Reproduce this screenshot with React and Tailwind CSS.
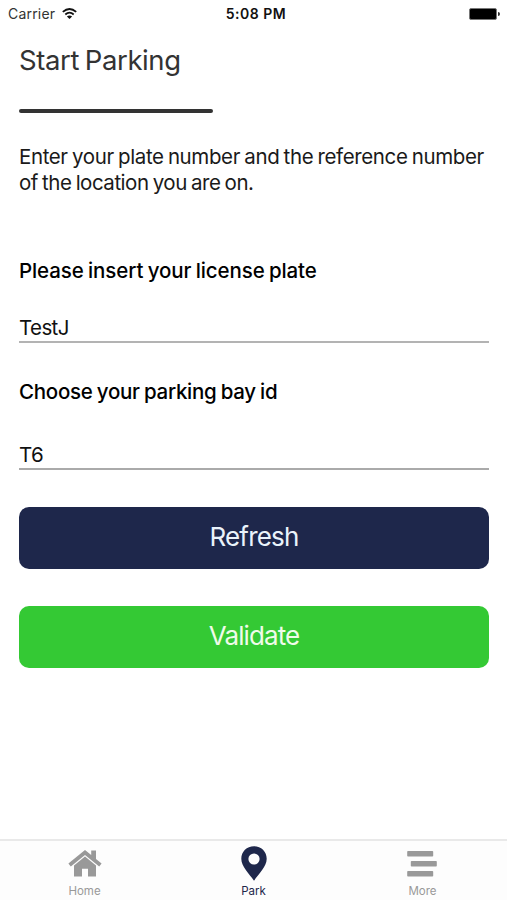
function WifiIcon() {
  return (
    <svg className="ml-[7px] mb-[2px] h-[11px] w-[15px]" viewBox="0 0 15 11" fill="none" stroke="#111" strokeWidth="1.8">
      <path d="M0.8 3.9 Q7.5 -2 14.2 3.9" />
      <path d="M3.3 6.5 Q7.5 2.8 11.7 6.5" />
      <path d="M7.5 11 L4.9 8.4 Q7.5 6.4 10.1 8.4 Z" fill="#111" stroke="none" />
    </svg>
  );
}

function StatusBar() {
  return (
    <header className="grid h-7 grid-cols-3 items-center pl-[8px] pr-[7px] text-[14px] leading-7 text-[#111]">
      <div className="flex items-center">
        <span className="tracking-[0.2px] text-[#333]">Carrier</span>
        <WifiIcon />
      </div>
      <div className="text-center font-semibold tracking-[0.5px] whitespace-nowrap pl-[4px]">5:08 PM</div>
      <div className="flex items-center justify-end">
        <div className="mb-px h-[12px] w-[28px] rounded-[2px] border border-[#777] bg-black" />
        <div className="ml-px h-[4px] w-[2px] rounded-r-full bg-[#333]" />
      </div>
    </header>
  );
}

function Field({ label, value, className, labelClass, lineClass }) {
  return (
    <div className={className}>
      <label className={`block text-[20.5px] leading-[26px] text-black ${labelClass}`}>{label}</label>
      <div className={`flex items-end text-[20.5px] leading-[26px] tracking-[-0.6px] text-[#111] ${lineClass}`}>{value}</div>
    </div>
  );
}

function HomeIcon() {
  return (
    <svg className="h-[27px] w-[34px]" viewBox="0 0 34 27" fill="#999">
      <path d="M17 0 L0.4 13.6 L2.8 16.5 L17 4.9 L31.2 16.5 L33.6 13.6 L28 9 V0.6 H23.2 V5.1 Z" />
      <path d="M17 6.6 L6 15.6 V26.4 H14 V18.8 H20 V26.4 H28 V15.6 Z" />
    </svg>
  );
}

function PinIcon() {
  return (
    <svg className="h-[35px] w-[26px]" viewBox="0 0 26 35">
      <path fillRule="evenodd" fill="#1e274b" d="M13 0.3 C5.8 0.3 0.3 5.8 0.3 12.7 C0.3 20.6 8.2 27.5 13 34.7 C17.8 27.5 25.7 20.6 25.7 12.7 C25.7 5.8 20.2 0.3 13 0.3 Z M13 7.4 A5.6 5.6 0 1 1 13 18.6 A5.6 5.6 0 1 1 13 7.4 Z" />
    </svg>
  );
}

function MoreIcon() {
  return (
    <svg className="mr-px h-[26px] w-[30px]" viewBox="0 0 30 26" fill="#999">
      <rect x="0.2" y="0" width="26" height="5.6" rx="0.8" />
      <rect x="3.8" y="10" width="26" height="5.6" rx="0.8" />
      <rect x="0.2" y="20" width="26" height="5.6" rx="0.8" />
    </svg>
  );
}

function Tab({ icon, label, className }) {
  return (
    <div className={`flex flex-col items-center ${className}`}>
      <div className="flex h-[43px] items-center justify-center pt-[2px]">{icon}</div>
      <span className="text-[11.5px] leading-[14px]">{label}</span>
    </div>
  );
}

export default function App() {
  return (
    <div className="flex h-[900px] w-[507px] flex-col bg-white font-['Inter','Liberation_Sans',sans-serif]">
      <StatusBar />
      <main className="flex flex-1 flex-col pl-[19px] pr-[18px]">
        <h1 className="mt-[14px] text-[27.5px] leading-[36px] tracking-[-0.4px] [word-spacing:-1.5px] text-[#333]">Start Parking</h1>
        <div className="mt-[31px] h-[4px] w-[194px] rounded-full bg-[#333]" />
        <p className="mt-[31px] text-[20.5px] leading-[26px] [word-spacing:-1.1px] text-[#1a1a1a]">
          <span className="block whitespace-nowrap tracking-[-0.38px]">Enter your plate number and the reference number</span>
          <span className="block whitespace-nowrap tracking-[-0.48px]">of the location you are on.</span>
        </p>
        <Field
          className="mt-[62px]"
          label="Please insert your license plate"
          value="TestJ"
          labelClass="font-medium tracking-[-0.1px] [word-spacing:-1px]"
          lineClass="h-[59px] border-b-2 border-[#b3b3b3]"
        />
        <Field
          className="mt-[36px]"
          label="Choose your parking bay id"
          value="T6"
          labelClass="font-medium tracking-[-0.27px] [word-spacing:-1px]"
          lineClass="h-[65px] border-b-2 border-[#aaa]"
        />
        <button className="mt-[36.5px] h-[62.5px] rounded-[10px] bg-[#1e274b] pb-[3px] text-[26px] tracking-[-0.8px] text-[#eaf3fb]">Refresh</button>
        <button className="mt-[36.5px] h-[62.5px] rounded-[10px] bg-[#34c934] pb-[3px] text-[26px] tracking-[-0.9px] text-[#effbe9]">Validate</button>
      </main>
      <nav className="grid h-[61px] grid-cols-3 border-t-2 border-[#e9e9e9] bg-[#fdfdfd]">
        <Tab icon={<HomeIcon />} label="Home" className="text-[#999]" />
        <Tab icon={<PinIcon />} label="Park" className="text-[#1e274b]" />
        <Tab icon={<MoreIcon />} label="More" className="text-[#999]" />
      </nav>
    </div>
  );
}
